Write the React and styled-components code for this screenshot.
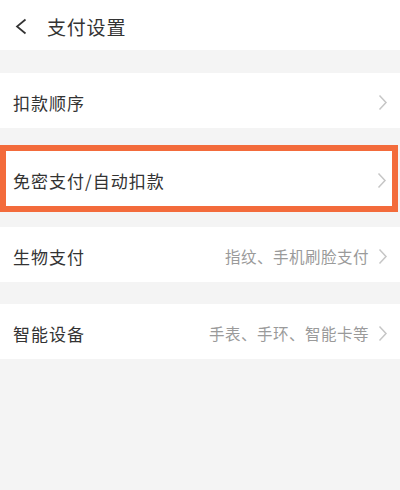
import React from "react";
import styled, { createGlobalStyle } from "styled-components";

const Global = createGlobalStyle`
  html, body { margin: 0; padding: 0; background: #f4f4f4; }
  body { font-family: "Noto Sans CJK SC", "Noto Sans", sans-serif; }
`;

const Page = styled.div`
  width: 400px;
  height: 490px;
  background: #f4f4f4;
  display: flex;
  flex-direction: column;
`;

const Header = styled.div`
  height: 50px;
  background: #fff;
  display: flex;
  align-items: center;
  padding-left: 14px;
  gap: 19px;
`;

const Title = styled.div`
  font-size: 19px;
  color: #333;
  letter-spacing: 0.8px;
  line-height: 1;
  padding-top: 3px;
`;

const List = styled.div`
  display: flex;
  flex-direction: column;
  gap: 22px;
  padding-top: 23px;
`;

const Row = styled.div`
  height: 55px;
  background: #fff;
  display: flex;
  align-items: center;
  padding: 0 12px 0 13px;
  box-sizing: border-box;
`;

const Label = styled.div`
  flex: 1;
  font-size: 17px;
  color: #333;
  padding-top: 4px;
  letter-spacing: 1px;
`;

const Sub = styled.div`
  font-size: 15.5px;
  color: #9a9a9a;
  padding-top: 3px;
  margin-right: 8px;
  letter-spacing: 0.5px;
`;

const Highlight = styled.div`
  border: 6px solid #f36b3b;
  margin: -5px 2px -7px 0;
  & > ${Row} {
    padding-left: 7px;
    padding-right: 5px;
    height: 55px;
  }
`;

const Chevron = () => (
  <svg width="11" height="17" viewBox="0 0 11 17" style={{ marginTop: 3 }}>
    <path d="M2.5 1.5 L9 8.5 L2.5 15.5" fill="none" stroke="#c6c6c6" strokeWidth="1.5" />
  </svg>
);

const Back = () => (
  <svg width="14" height="17" viewBox="0 0 14 17" style={{ marginTop: 2 }}>
    <path d="M11.5 1.5 L3 8.5 L11.5 15.5" fill="none" stroke="#333" strokeWidth="1.7" />
  </svg>
);

export default function App() {
  return (
    <Page>
      <Global />
      <Header>
        <Back />
        <Title>支付设置</Title>
      </Header>
      <List>
        <Row>
          <Label>扣款顺序</Label>
          <Chevron />
        </Row>
        <Highlight>
          <Row>
            <Label>免密支付/自动扣款</Label>
            <Chevron />
          </Row>
        </Highlight>
        <Row>
          <Label>生物支付</Label>
          <Sub>指纹、手机刷脸支付</Sub>
          <Chevron />
        </Row>
        <Row>
          <Label>智能设备</Label>
          <Sub>手表、手环、智能卡等</Sub>
          <Chevron />
        </Row>
      </List>
    </Page>
  );
}
